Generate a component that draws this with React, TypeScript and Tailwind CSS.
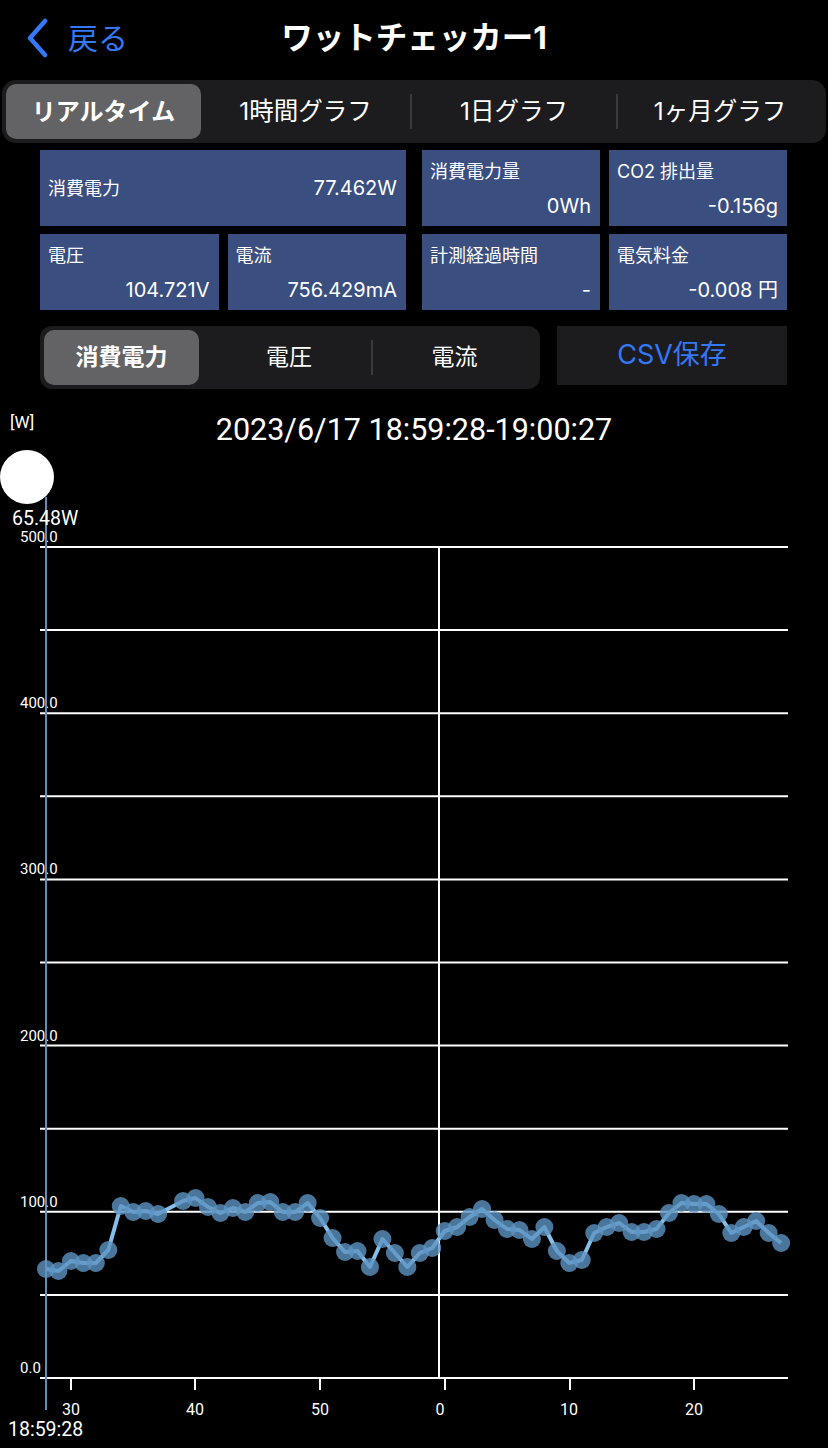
import React from "react";

const FONT = { fontFamily: 'Inter, "Noto Sans CJK JP", sans-serif' };
const NARROW = 'Roboto, "Liberation Sans", sans-serif';

const ys: [number, number][] = [
  [0, 1269], [1, 1271], [2, 1261], [3, 1263], [4, 1263], [5, 1250], [6, 1206], [7, 1212],
  [8, 1211], [9, 1214], [11, 1201], [12, 1198], [13, 1207], [14, 1213], [15, 1208],
  [16, 1212], [17, 1203], [18, 1202], [19, 1212], [20, 1212], [21, 1203], [22, 1218],
  [23, 1238], [24, 1252], [25, 1251], [26, 1267], [27, 1239], [28, 1253], [29, 1267],
  [30, 1253], [31, 1248], [32, 1231], [33, 1227], [34, 1217], [35, 1209], [36, 1220],
  [37, 1229], [38, 1230], [39, 1239], [40, 1227], [41, 1251], [42, 1263], [43, 1260],
  [44, 1233], [45, 1227], [46, 1223], [47, 1232], [48, 1232], [49, 1229], [50, 1213],
  [51, 1203], [52, 1204], [53, 1204], [54, 1214], [55, 1233], [56, 1227], [57, 1221],
  [58, 1233], [59, 1243],
];

const OY = 400;
const pts = ys.map(([s, y]) => [46 + s * 12.46, y - OY] as [number, number]);

function Card({ label, value, single }: { label: string; value: string; single?: boolean }) {
  if (single) {
    return (
      <div className="col-span-2 h-[76px] bg-[#3a4f7f] flex items-center justify-between pl-[8px] pr-[9px] text-white text-[18px]">
        <span>{label}</span>
        <span className="text-[20px]">{value}</span>
      </div>
    );
  }
  return (
    <div className="h-[76px] bg-[#3a4f7f] flex flex-col justify-between pl-[8px] pr-[9px] pt-[9px] pb-[7px] text-white text-[18px]">
      <span className="leading-[25px]">{label}</span>
      <span className="self-end text-[20px] leading-[25px]">{value}</span>
    </div>
  );
}

function Chart() {
  const gridYs = Array.from({ length: 11 }, (_, k) => 147 + k * 83.1);
  const labels = [
    ["500.0", 0],
    ["400.0", 2],
    ["300.0", 4],
    ["200.0", 6],
    ["100.0", 8],
    ["0.0", 10],
  ] as [string, number][];
  const ticks: [number, string, number][] = [
    [71, "30", 71],
    [195, "40", 195],
    [320, "50", 320],
    [445, "0", 440],
    [570, "10", 569],
    [694, "20", 694],
  ];
  const d = pts.map((p, i) => `${i === 0 ? "M" : "L"}${p[0].toFixed(1)} ${p[1]}`).join(" ");
  return (
    <svg width={828} height={1048} viewBox="0 0 828 1048" className="block">
      {gridYs.map((y, i) => (
        <line key={i} x1={40} x2={788} y1={y} y2={y} stroke="#ffffff" strokeWidth={2} />
      ))}
      <line x1={439} x2={439} y1={147} y2={978} stroke="#ffffff" strokeWidth={2} />
      {ticks.map(([x, t, lx], i) => (
        <g key={i}>
          <line x1={x} x2={x} y1={978} y2={990} stroke="#ffffff" strokeWidth={2} />
          <text x={lx} y={1015} fill="#ffffff" fontSize={16} textAnchor="middle" style={{ fontFamily: NARROW }}>
            {t}
          </text>
        </g>
      ))}
      {labels.map(([t, k]) => (
        <text key={t} x={20} y={147 + k * 83.1 - 5} fill="#ffffff" fontSize={15} style={{ fontFamily: NARROW }}>
          {t}
        </text>
      ))}
      <line x1={46} x2={46} y1={97} y2={1010} stroke="#5b8fc0" strokeWidth={2} />
      <path d={d} fill="none" stroke="#86bfea" strokeWidth={4} strokeLinejoin="round" />
      {pts.map((p, i) => (
        <circle key={i} cx={p[0]} cy={p[1]} r={9} fill="#5e94c2" fillOpacity={0.8} />
      ))}
      <circle cx={27} cy={77} r={27} fill="#ffffff" />
      <text x={12} y={125} fill="#ffffff" fontSize={19.5} style={{ fontFamily: NARROW }}>
        65.48W
      </text>
      <text x={8} y={1036} fill="#ffffff" fontSize={19.5} style={{ fontFamily: NARROW }}>
        18:59:28
      </text>
    </svg>
  );
}

export default function App() {
  return (
    <div className="w-[828px] min-h-[1448px] bg-black text-white overflow-hidden" style={FONT}>
      {/* header */}
      <div className="relative h-[80px] flex items-center justify-center">
        <div className="absolute left-[24px] top-[18px] flex items-center gap-[18px] text-[#3478f6]">
          <svg width="26" height="40" viewBox="0 0 26 40">
            <path d="M21 3 L6 20 L21 37" fill="none" stroke="#3478f6" strokeWidth="4.5" strokeLinecap="round" strokeLinejoin="round" />
          </svg>
          <span className="text-[30px] leading-[40px]">戻る</span>
        </div>
        <span className="text-[31.5px] font-bold leading-[40px] -mt-[4px]">ワットチェッカー1</span>
      </div>

      {/* tabs */}
      <div className="mx-[2px] h-[63px] rounded-[14px] bg-[#1c1c1e] p-[4px] flex items-stretch">
        <div className="w-[195px] rounded-[10px] bg-[#636366] flex items-center justify-center text-[24px] font-bold">
          リアルタイム
        </div>
        <div className="flex-1 flex items-center justify-center text-[24.5px]">1時間グラフ</div>
        <div className="w-[2px] my-[10px] bg-[#3a3a3c]" />
        <div className="w-[204px] flex items-center justify-center text-[24.5px]">1日グラフ</div>
        <div className="w-[2px] my-[10px] bg-[#3a3a3c]" />
        <div className="w-[204px] flex items-center justify-center text-[24.5px]">1ヶ月グラフ</div>
      </div>

      {/* cards */}
      <div className="mt-[7px] pl-[40px] flex gap-[16px]">
        <div className="w-[366px] grid grid-cols-2 gap-x-[9px] gap-y-[8px]">
          <Card label="消費電力" value="77.462W" single />
          <Card label="電圧" value="104.721V" />
          <Card label="電流" value="756.429mA" />
        </div>
        <div className="w-[365px] grid grid-cols-2 gap-x-[9px] gap-y-[8px]">
          <Card label="消費電力量" value="0Wh" />
          <Card label="CO2 排出量" value="-0.156g" />
          <Card label="計測経過時間" value="-" />
          <Card label="電気料金" value="-0.008 円" />
        </div>
      </div>

      {/* segment + csv */}
      <div className="mt-[16px] pl-[40px] flex items-start gap-[17px]">
        <div className="w-[500px] h-[63px] rounded-[12px] bg-[#1c1c1e] p-[4px] flex items-stretch">
          <div className="w-[155px] rounded-[10px] bg-[#636366] flex items-center justify-center text-[23px] font-bold">
            消費電力
          </div>
          <div className="flex-1 flex items-center justify-center text-[23px] pl-[8px]">電圧</div>
          <div className="w-[2px] my-[10px] bg-[#3a3a3c]" />
          <div className="w-[163px] flex items-center justify-center text-[23px]">電流</div>
        </div>
        <div className="w-[230px] h-[59px] bg-[#1c1c1e] flex items-center justify-center text-[27px] text-[#3478f6]">
          CSV保存
        </div>
      </div>

      {/* chart header */}
      <div className="relative h-[21px]">
        <span className="absolute left-[10px] top-[23px] text-[17px] leading-[20px]" style={{ fontFamily: NARROW }}>[W]</span>
      </div>
      <div className="flex justify-center">
        <span className="text-[30.5px] leading-[40px]" style={{ fontFamily: NARROW }}>
          2023/6/17 18:59:28-19:00:27
        </span>
      </div>
      <div className="-mt-[50px]">
        <Chart />
      </div>
    </div>
  );
}
